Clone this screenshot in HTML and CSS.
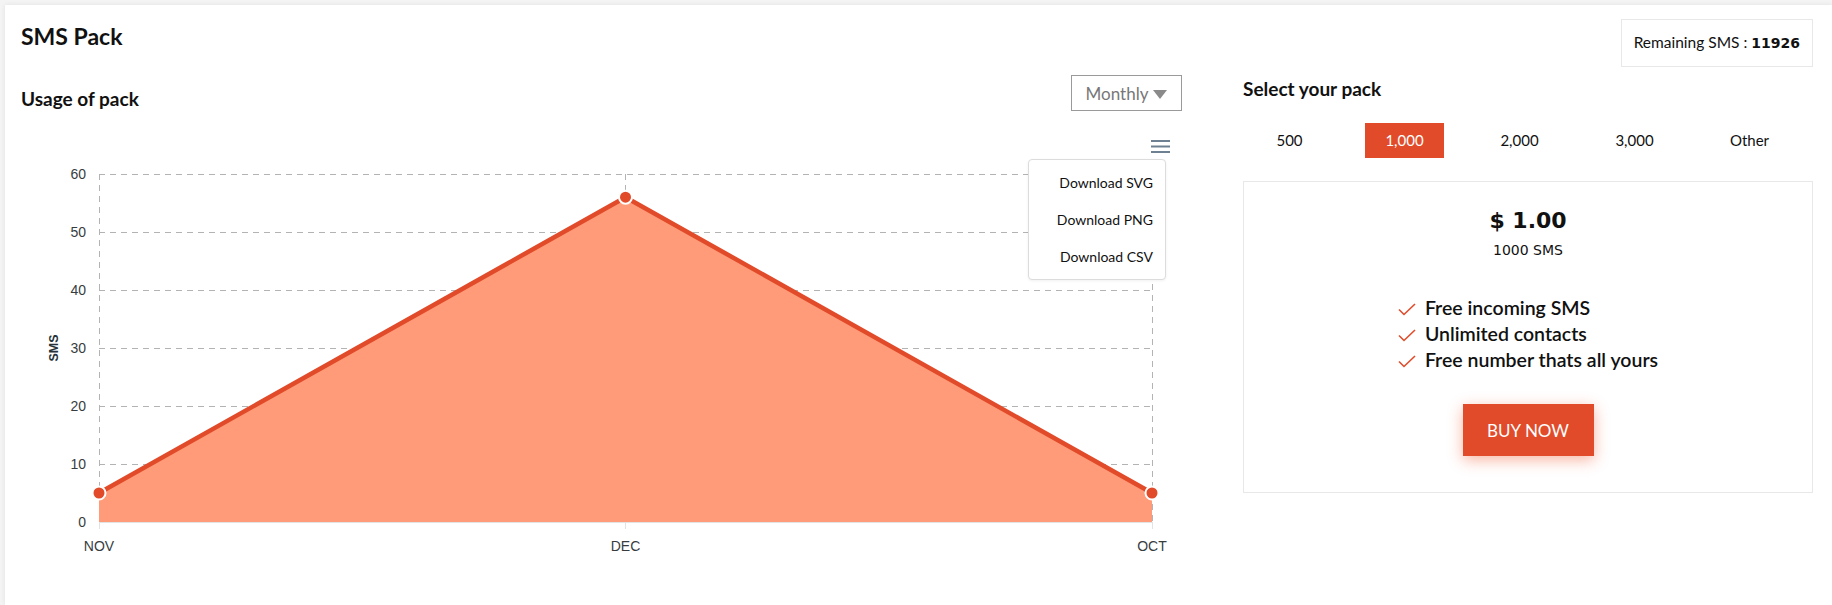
FILE: index.html
```html
<!DOCTYPE html>
<html lang="en">
<head>
<meta charset="utf-8">
<title>SMS Pack</title>
<link rel="stylesheet" href="styles.css">
</head>
<body>
<div class="card">
  <div class="header">
    <h1 class="title">SMS Pack</h1>
    <div class="remaining">Remaining SMS : <b class="count">11926</b></div>
  </div>
  <div class="columns">
    <section class="usage">
      <div class="usage-head">
        <h2 class="subtitle usage-title">Usage of pack</h2>
        <div class="select">Monthly <span class="caret"></span></div>
      </div>
      <div class="chart">
        <svg class="chart-svg" width="1161" height="440" viewBox="0 0 1161 440" xmlns="http://www.w3.org/2000/svg">
          <g class="grid" stroke="#b3b3b3" stroke-width="1" stroke-dasharray="6 5" fill="none">
            <line x1="78" y1="49.5" x2="1131" y2="49.5"/>
            <line x1="78" y1="107.5" x2="1131" y2="107.5"/>
            <line x1="78" y1="165.5" x2="1131" y2="165.5"/>
            <line x1="78" y1="223.5" x2="1131" y2="223.5"/>
            <line x1="78" y1="281.5" x2="1131" y2="281.5"/>
            <line x1="78" y1="339.5" x2="1131" y2="339.5"/>
            <line x1="78.5" y1="49" x2="78.5" y2="397"/>
            <line x1="604.5" y1="49" x2="604.5" y2="397"/>
            <line x1="1131.5" y1="49" x2="1131.5" y2="397"/>
          </g>
          <polygon points="78,368 604.5,72.2 1131,368 1131,397 78,397" fill="#ff9b78"/>
          <polyline points="78,368 604.5,72.2 1131,368" fill="none" stroke="#e14b2a" stroke-width="4.5" stroke-linejoin="round"/>
          <g stroke="#e3e3e3" stroke-width="1">
            <line x1="78" y1="397.5" x2="1131" y2="397.5"/>
            <line x1="78.5" y1="397" x2="78.5" y2="404"/>
            <line x1="604.5" y1="397" x2="604.5" y2="404"/>
            <line x1="1131.5" y1="397" x2="1131.5" y2="404"/>
          </g>
          <g fill="#e14b2a" stroke="#ffffff" stroke-width="2">
            <circle cx="78" cy="368" r="6.5"/>
            <circle cx="604.5" cy="72.2" r="6.5"/>
            <circle cx="1131" cy="368" r="6.5"/>
          </g>
          <g class="ylabels" font-family="Liberation Sans, Arial, sans-serif" font-size="14" fill="#373d3f" text-anchor="end">
            <text x="65" y="54">60</text>
            <text x="65" y="112">50</text>
            <text x="65" y="170">40</text>
            <text x="65" y="228">30</text>
            <text x="65" y="286">20</text>
            <text x="65" y="344">10</text>
            <text x="65" y="402">0</text>
          </g>
          <g class="xlabels" font-family="Liberation Sans, Arial, sans-serif" font-size="14" fill="#373d3f" text-anchor="middle">
            <text x="78" y="426">NOV</text>
            <text x="604.5" y="426">DEC</text>
            <text x="1131" y="426">OCT</text>
          </g>
          <text x="37" y="223" transform="rotate(-90 37 223)" text-anchor="middle" font-family="Liberation Sans, Arial, sans-serif" font-size="12.5" font-weight="bold" fill="#263238">SMS</text>
          <g class="hamburger" stroke="#6e8192" stroke-width="2">
            <line x1="1130" y1="16" x2="1149" y2="16"/>
            <line x1="1130" y1="21.5" x2="1149" y2="21.5"/>
            <line x1="1130" y1="27" x2="1149" y2="27"/>
          </g>
        </svg>
        <ul class="menu">
          <li>Download SVG</li>
          <li>Download PNG</li>
          <li>Download CSV</li>
        </ul>
      </div>
    </section>
    <section class="packs">
      <h2 class="subtitle">Select your pack</h2>
      <div class="tabs">
        <span class="tab">500</span>
        <span class="tab active">1,000</span>
        <span class="tab">2,000</span>
        <span class="tab">3,000</span>
        <span class="tab">Other</span>
      </div>
      <div class="pack-card">
        <div class="price">$ 1.00</div>
        <div class="qty">1000 SMS</div>
        <ul class="features">
          <li><svg class="check" width="18" height="13" viewBox="0 0 18 13"><polyline points="1,6.5 6,11.5 17,1" fill="none" stroke="#e14b2a" stroke-width="1.6"/></svg>Free incoming SMS</li>
          <li><svg class="check" width="18" height="13" viewBox="0 0 18 13"><polyline points="1,6.5 6,11.5 17,1" fill="none" stroke="#e14b2a" stroke-width="1.6"/></svg>Unlimited contacts</li>
          <li><svg class="check" width="18" height="13" viewBox="0 0 18 13"><polyline points="1,6.5 6,11.5 17,1" fill="none" stroke="#e14b2a" stroke-width="1.6"/></svg>Free number thats all yours</li>
        </ul>
        <button class="buy">BUY NOW</button>
      </div>
    </section>
  </div>
</div>
</body>
</html>
```

FILE: styles.css
```css
* { box-sizing: border-box; }
html, body { margin: 0; padding: 0; }
body {
  background: #f4f4f4;
  font-family: "Lato", "Noto Sans", sans-serif;
  color: #111;
}
.card {
  margin: 5px 0 0 5px;
  min-height: 600px;
  background: #fff;
  box-shadow: 0 0 5px rgba(0,0,0,0.08);
  padding: 14px 19px 0 16px;
}
.header {
  display: flex;
  justify-content: space-between;
  align-items: flex-start;
}
.title {
  margin: 3px 0 0 0;
  font-size: 23px;
  font-weight: 700;
  line-height: 28px;
  color: #111;
}
.remaining {
  border: 1px solid #e8e8e8;
  padding: 13px 12px;
  font-size: 15.5px;
  line-height: 19px;
  color: #111;
}
.count {
  font-family: "DejaVu Sans", Verdana, sans-serif;
  font-size: 14px;
  font-weight: bold;
}
.columns {
  display: grid;
  grid-template-columns: 1161px 570px;
  justify-content: space-between;
  margin-top: 8px;
}
.subtitle {
  margin: 0;
  font-size: 19px;
  font-weight: 700;
  line-height: 24px;
  color: #111;
}
.usage-head {
  display: flex;
  justify-content: space-between;
  align-items: flex-end;
}
.usage-title { margin-bottom: 0; }
.select {
  width: 111px;
  height: 36px;
  border: 1px solid #9a9a9a;
  display: flex;
  align-items: center;
  justify-content: center;
  gap: 5px;
  font-size: 17px;
  color: #777;
}
.caret {
  width: 0;
  height: 0;
  border-left: 7px solid transparent;
  border-right: 7px solid transparent;
  border-top: 9px solid #8a8a8a;
  margin-top: 2px;
}
.chart {
  position: relative;
  margin-top: 14px;
}
.chart-svg { display: block; }
.menu {
  position: absolute;
  left: 1007px;
  top: 34px;
  width: 138px;
  margin: 0;
  padding: 4px 0;
  list-style: none;
  background: #fff;
  border: 1px solid #dcdcdc;
  border-radius: 4px;
  box-shadow: 0 1px 3px rgba(0,0,0,0.06);
}
.menu li {
  text-align: right;
  padding: 0 12px;
  height: 37px;
  line-height: 37px;
  font-size: 14px;
  color: #111;
}
.packs .subtitle { margin-top: 2px; }
.tabs {
  display: grid;
  grid-template-columns: repeat(5, 115px);
  margin: 22px 0 0 -11px;
}
.tab {
  justify-self: center;
  height: 35px;
  line-height: 35px;
  padding: 0 20px;
  font-size: 15px;
  color: #111;
}
.tab.active {
  background: #e14b2a;
  color: #fff;
}
.pack-card {
  margin-top: 23px;
  border: 1px solid #e8e8e8;
  padding: 23px 0 36px;
  text-align: center;
}
.price {
  font-family: "DejaVu Sans", Verdana, sans-serif;
  font-size: 22px;
  font-weight: bold;
  line-height: 32px;
  color: #111;
}
.qty {
  font-family: "DejaVu Sans", Verdana, sans-serif;
  font-size: 14px;
  line-height: 20px;
  margin-top: 3px;
  color: #111;
}
.features {
  display: inline-block;
  list-style: none;
  margin: 34px 0 0 0;
  padding: 0;
  text-align: left;
}
.features li {
  display: flex;
  align-items: center;
  height: 26px;
  font-size: 19.5px;
  font-weight: 600;
  color: #111;
}
.check {
  margin-right: 9px;
  margin-top: 4px;
}
.buy {
  display: block;
  margin: 32px auto 0;
  width: 131px;
  height: 52px;
  border: 0;
  background: #e14b2a;
  color: #fff;
  font-family: "Lato", "Noto Sans", sans-serif;
  font-size: 17px;
  box-shadow: 0 4px 14px rgba(240,90,50,0.45);
}
```
